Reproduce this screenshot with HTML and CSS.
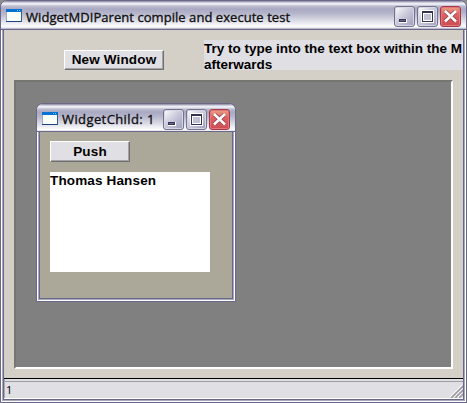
FILE: index.html
```html
<!DOCTYPE html>
<html lang="en">
<head>
<meta charset="utf-8">
<title>WidgetMDIParent compile and execute test</title>
<link rel="stylesheet" href="styles.css">
</head>
<body>
<svg class="defs" width="0" height="0">
  <defs>
    <symbol id="min" viewBox="0 0 21 21"><path d="M5 13h8v4H5z" fill="#fff"/><path d="M5 13h7v3H5z" fill="#39355b"/><path d="M6 14h5v1H6z" fill="#68658b"/></symbol>
    <symbol id="max" viewBox="0 0 21 21"><path d="M4 4h13v13H4z" fill="#fff"/><path d="M5 5h11v11H5z" fill="#343251"/><path d="M6 7h9v8H6z" fill="#fff"/><path d="M7 8h7v6H7z" fill="#bfc0d3"/></symbol>
    <symbol id="close" viewBox="0 0 21 21"><path d="M5.500 5.500l10 9.500M15.500 5.500l-10 9.500" stroke="#963f50" stroke-width="4"/><path d="M5 5l11 10.500M16 5L5 15.500" stroke="#fff" stroke-width="2.500"/></symbol>
    <symbol id="app" viewBox="0 0 16 14"><path d="M0 0h16v13H0z" fill="#9aabbd"/><path d="M0 0h16v3H0z" fill="#0872d2"/><path d="M1 3h14v9H1z" fill="#fcfefa"/><path d="M0 12h16v1H0z" fill="#19457c"/><path d="M15 2h1v11h-1z" fill="#315f95"/><path d="M11 1h1v1h-1zM13 1h1v1h-1z" fill="#70c6ff"/></symbol>
  </defs>
</svg>
<div class="window parent">
  <header class="titlebar">
    <svg class="app-icon"><use href="#app"/></svg>
    <h1 class="caption">WidgetMDIParent compile and execute test</h1>
    <div class="controls">
      <button class="control" aria-label="Minimize"><svg><use href="#min"/></svg></button>
      <button class="control" aria-label="Maximize"><svg><use href="#max"/></svg></button>
      <button class="control close" aria-label="Close"><svg><use href="#close"/></svg></button>
    </div>
  </header>
  <main class="client">
    <div class="toolbar">
      <button class="push new"><span>New Window</span></button>
      <p class="hint">Try to type into the text box within the M<br>afterwards</p>
    </div>
    <div class="workspace">
      <section class="window child">
        <header class="titlebar">
          <svg class="app-icon"><use href="#app"/></svg>
          <h2 class="caption">WidgetChild: 1</h2>
          <div class="controls">
            <button class="control" aria-label="Minimize"><svg><use href="#min"/></svg></button>
            <button class="control" aria-label="Maximize"><svg><use href="#max"/></svg></button>
            <button class="control close" aria-label="Close"><svg><use href="#close"/></svg></button>
          </div>
        </header>
        <div class="child-client">
          <button class="push small"><span>Push</span></button>
          <div class="textbox">Thomas Hansen</div>
        </div>
      </section>
    </div>
    <footer class="status"><span>1</span>
      <svg class="grip" viewBox="0 0 13 13"><path d="M1 13L13 1M5 13l8-8M9 13l4-4" stroke="#fff" stroke-width="1.500" transform="translate(-1 -.5)"/><path d="M1 13L13 1M5 13l8-8M9 13l4-4" stroke="#9b989e" stroke-width="1.700"/></svg>
    </footer>
  </main>
</div>
</body>
</html>
```
FILE: styles.css
```css
* { box-sizing: border-box; }
body { margin: 0; width: 467px; height: 403px; overflow: hidden; background: #8d8d8d; }
h1, h2, p { margin: 0; }
button { margin: 0; padding: 0; }
svg { display: block; }
.defs { position: absolute; }

.window {
  display: flex;
  flex-direction: column;
  padding: 0 3px 3px;
  border: 1px solid #69678a;
  border-radius: 7px 7px 0 0;
  background: #a8a8c0;
  box-shadow: inset 0 0 0 1px #fff;
}
.parent { width: 467px; height: 403px; }
.child { width: 200px; height: 199px; }

.titlebar {
  flex: none;
  display: flex;
  align-items: center;
  height: 29px;
  margin: 0 -3px;
  padding: 0 5px;
  border-radius: 6px 6px 0 0;
  border-bottom: 1px solid #69678a;
  background: linear-gradient(#85839f 0, #e4e4ee 2px, #f5f5fa 3px, #bdbdd0 5px, #a9a9c3 8px, #b4b4ca 12px, #d3d3e0 18px, #f4f4f8 24px, #fff 26px, #a8a8c0 28px);
}
.child .titlebar { height: 28px; }
.app-icon { width: 16px; height: 14px; margin-top: 2px; }
.caption {
  flex: 1;
  margin-left: 4px;
  padding-top: 4px;
  font: 13px/20px "Open Sans", sans-serif;
  letter-spacing: .05px;
  -webkit-text-stroke: .35px #111;
  white-space: nowrap;
  color: #111;
}
.child .caption { padding-top: 3px; letter-spacing: .4px; }
.controls { display: flex; gap: 2px; padding-top: 3px; }
.control {
  width: 21px;
  height: 21px;
  border: 1px solid #74728f;
  border-radius: 3px;
  background: linear-gradient(135deg, #fff, #d0d0df 40%, #9d9dbc);
  box-shadow: inset 0 0 0 1px #d5d5e3;
}
.control svg { width: 21px; height: 21px; margin: -1px; }
.close {
  border-color: #a7384b;
  background: linear-gradient(#eaa184, #dc6262 40%, #cc4c53);
  box-shadow: inset 0 0 0 1px #e1777a;
}

.client {
  flex: 1;
  display: flex;
  flex-direction: column;
  border: 1px solid #69678a;
  border-top: 0;
  margin: 0 -1px -1px;
  background: #d4d0c8;
}
.toolbar { display: flex; height: 50px; padding: 10px 0 0 60px; }
.push {
  border: 1px solid;
  border-color: #fff #716f72 #716f72 #fff;
  box-shadow: inset -1px -1px #a5a2a5;
  background: #e0dfe3;
  color: #000;
  font: bold 13.5px/16px "Liberation Sans", sans-serif;
  letter-spacing: .15px;
}
.new { width: 100px; height: 20px; margin-top: 10px; }
.small { width: 80px; height: 21px; display: block; }
.hint {
  flex: 1;
  height: 30px;
  margin-left: 40px;
  padding-top: 1px;
  background: #e0dfe3;
  font: bold 13.5px/16px "Liberation Sans", sans-serif;
  letter-spacing: 0;
  white-space: nowrap;
}
.workspace {
  flex: none;
  width: 439px;
  height: 289px;
  margin-left: 10px;
  padding: 21px 0 0 20px;
  border: 2px solid;
  border-color: #77756f #fff #fff #77756f;
  background: #808080;
}
.child-client {
  flex: 1;
  margin: 0 -1px -1px;
  padding: 9px 0 0 10px;
  border: 1px solid #69678a;
  border-top: 0;
  background: #aca899;
}
.textbox {
  width: 160px;
  height: 100px;
  margin-top: 10px;
  background: #fff;
  font: bold 13.5px/17px "Liberation Sans", sans-serif;
  letter-spacing: .15px;
}
.status {
  display: flex;
  justify-content: space-between;
  align-items: flex-end;
  height: 21px;
  margin-top: auto;
  border-top: 1px solid #000;
  border-bottom: 1px solid #fff;
  background: linear-gradient(#e0dfe3 2px, #9d9da1 2px, #9d9da1 3px, #e0dfe3 3px);
  font: 11px/16px "Open Sans", sans-serif;
  box-shadow: inset 1px 0 #aaa9b0;
}
.status span { padding-left: 2px; }
.grip { width: 13px; height: 13px; }
```
